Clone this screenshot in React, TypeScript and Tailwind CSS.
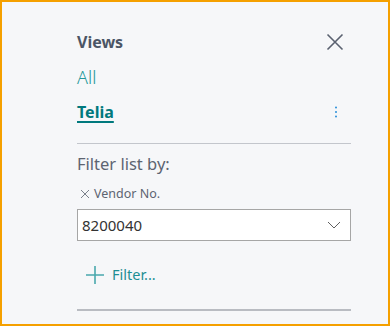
import React from "react";

export default function App() {
  return (
    <div className="w-[390px] h-[326px] border-2 border-[#f5a000] bg-[#f6f7f9] box-border" style={{ fontFamily: '"Noto Sans", "Open Sans", sans-serif' }}>
      <div className="ml-[75px] mr-[37px] pt-[26px]">
        <div className="flex items-center justify-between h-[28px]">
          <span className="text-[16px] font-bold text-[#4b5565]">Views</span>
          <svg width="18" height="18" viewBox="0 0 18 18" className="mr-[7px]">
            <path d="M1.5 1.5 L16.5 16.5 M16.5 1.5 L1.5 16.5" stroke="#5a6170" strokeWidth="1.6" fill="none" />
          </svg>
        </div>
        <div className="mt-[8px] h-[26px] text-[18px] font-light text-[#23979a] leading-[26px]">All</div>
        <div className="mt-[9px] flex items-center justify-between h-[26px]">
          <span className="text-[16px] font-bold text-[#00797d] underline underline-offset-[3px] decoration-[1.5px]">Telia</span>
          <svg width="4" height="12" viewBox="0 0 4 12" className="mr-[13px]">
            <circle cx="2" cy="1.5" r="1" fill="#2a8fd8" />
            <circle cx="2" cy="6" r="1" fill="#2a8fd8" />
            <circle cx="2" cy="10.5" r="1" fill="#2a8fd8" />
          </svg>
        </div>
        <div className="mt-[18px] h-px bg-[#c3c6cc]" />
        <div className="mt-[8px] text-[16.5px] text-[#5d6471] leading-[24px]">Filter list by:</div>
        <div className="mt-[9px] flex items-center gap-[4px] text-[12.5px] text-[#5d6471] leading-[18px]">
          <svg width="10" height="10" viewBox="0 0 10 10" className="ml-[3px]">
            <path d="M1 1 L9 9 M9 1 L1 9" stroke="#7a808a" strokeWidth="1" fill="none" />
          </svg>
          <span>Vendor No.</span>
        </div>
        <div className="mt-[6px] h-[32px] border border-[#a6a6a6] bg-white flex items-center justify-between pl-[4px] pr-[9px]">
          <span className="text-[15px] text-[#333]">8200040</span>
          <svg width="14" height="8" viewBox="0 0 14 8">
            <path d="M1 1 L7 7 L13 1" stroke="#606060" strokeWidth="1" fill="none" />
          </svg>
        </div>
        <div className="mt-[24px] flex items-center gap-[8px] pl-[9px] h-[20px]">
          <svg width="18" height="18" viewBox="0 0 18 18">
            <path d="M9 0 V18 M0 9 H18" stroke="#4aa8ad" strokeWidth="1.6" fill="none" />
          </svg>
          <span className="text-[14.5px] text-[#1e8f94]">Filter...</span>
        </div>
        <div className="mt-[24px] h-[2px] bg-[#b9bcc2]" />
      </div>
    </div>
  );
}
